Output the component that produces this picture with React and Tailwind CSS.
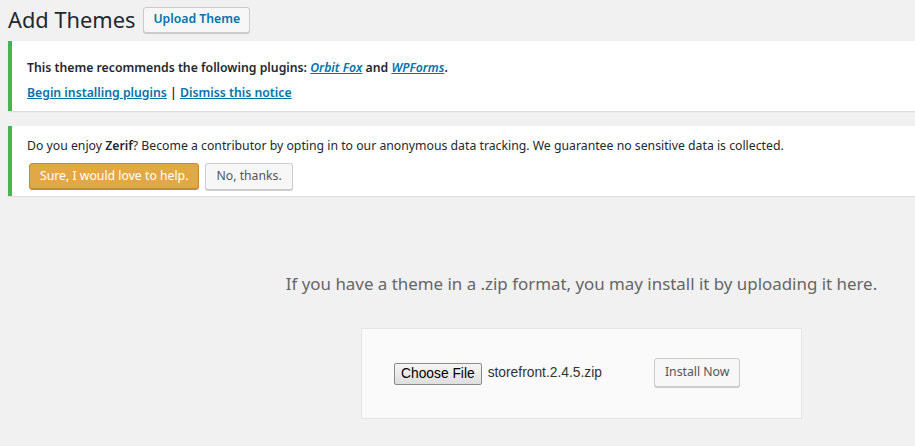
import React from 'react';

const font = { fontFamily: '"Noto Sans", "Open Sans", sans-serif' };
const arial = { fontFamily: '"Liberation Sans", Arial, sans-serif' };

function Notice({ children, className }) {
  return (
    <div className={`bg-white border-l-4 border-[#46b450] shadow-[0_1px_1px_rgba(0,0,0,0.08)] pl-[15px] ${className}`}>
      {children}
    </div>
  );
}

export default function App() {
  return (
    <div
      className="w-[915px] h-[446px] overflow-hidden bg-[#f1f1f1] text-[#23282d] text-[12.25px]"
      style={font}
    >
      <div className="w-[1147px] ml-2">
        <div className="flex items-center h-[38px] pt-[1px]">
          <h1 className="text-[21.8px] leading-[29px] font-normal text-[#23282d]">Add Themes</h1>
          <button className="ml-2 h-[26px] px-[9px] text-[12.25px] font-semibold text-[#0073aa] bg-[#f7f7f7] border border-[#cccccc] rounded-[3px] shadow-[0_1px_0_#cccccc] leading-none">
            Upload Theme
          </button>
        </div>

        <Notice className="mt-[3px] h-[70px] pt-[17px]">
          <p className="h-5 leading-5 font-semibold">
            This theme recommends the following plugins:{' '}
            <a className="italic underline text-[#0073aa]">Orbit Fox</a> and{' '}
            <a className="italic underline text-[#0073aa]">WPForms</a>.
          </p>
          <p className="h-5 leading-5 mt-[5px] font-semibold">
            <a className="underline text-[#0073aa]">Begin installing plugins</a> |{' '}
            <a className="underline text-[#0073aa]">Dismiss this notice</a>
          </p>
        </Notice>

        <Notice className="mt-[15px] h-[70px] pt-[10px]">
          <p className="h-5 leading-5">
            Do you enjoy <b className="font-semibold">Zerif</b>? Become a contributor by opting in to our anonymous data tracking. We guarantee no sensitive data is collected.
          </p>
          <div className="flex gap-[6px] mt-[7px] ml-[2px]">
            <button className="h-[27px] px-[10px] bg-[#e2a845] border border-[#c28b2c] rounded-[3px] text-white text-[12.25px] shadow-[inset_0_-1px_0_#c28b2c]">
              Sure, I would love to help.
            </button>
            <button className="h-[27px] px-[10px] bg-[#f7f7f7] border border-[#cccccc] rounded-[3px] text-[#555555] text-[12.25px] shadow-[0_1px_0_#cccccc]">
              No, thanks.
            </button>
          </div>
        </Notice>

        <p className="mt-[76px] text-center text-[16.9px] leading-[24px] text-[#666666]">
          If you have a theme in a .zip format, you may install it by uploading it here.
        </p>

        <div className="mx-auto mt-[32px] w-[441px] h-[91px] bg-[#fafafa] border border-[#e5e5e5] flex items-center pl-[32px]">
          <button
            className="h-[22px] px-[6px] bg-gradient-to-b from-[#f6f6f6] to-[#dedede] border border-[#8a8a8a] rounded-[2px] text-[13.8px] leading-none text-black"
            style={arial}
          >
            Choose File
          </button>
          <span className="ml-[6px] text-[13.8px] text-[#333333]" style={arial}>
            storefront.2.4.5.zip
          </span>
          <button className="ml-[52px] mb-[2px] h-[29px] px-[10px] bg-[#f7f7f7] border border-[#cccccc] rounded-[3px] text-[#555555] text-[12.25px] shadow-[0_1px_0_#cccccc]">
            Install Now
          </button>
        </div>
      </div>
    </div>
  );
}
